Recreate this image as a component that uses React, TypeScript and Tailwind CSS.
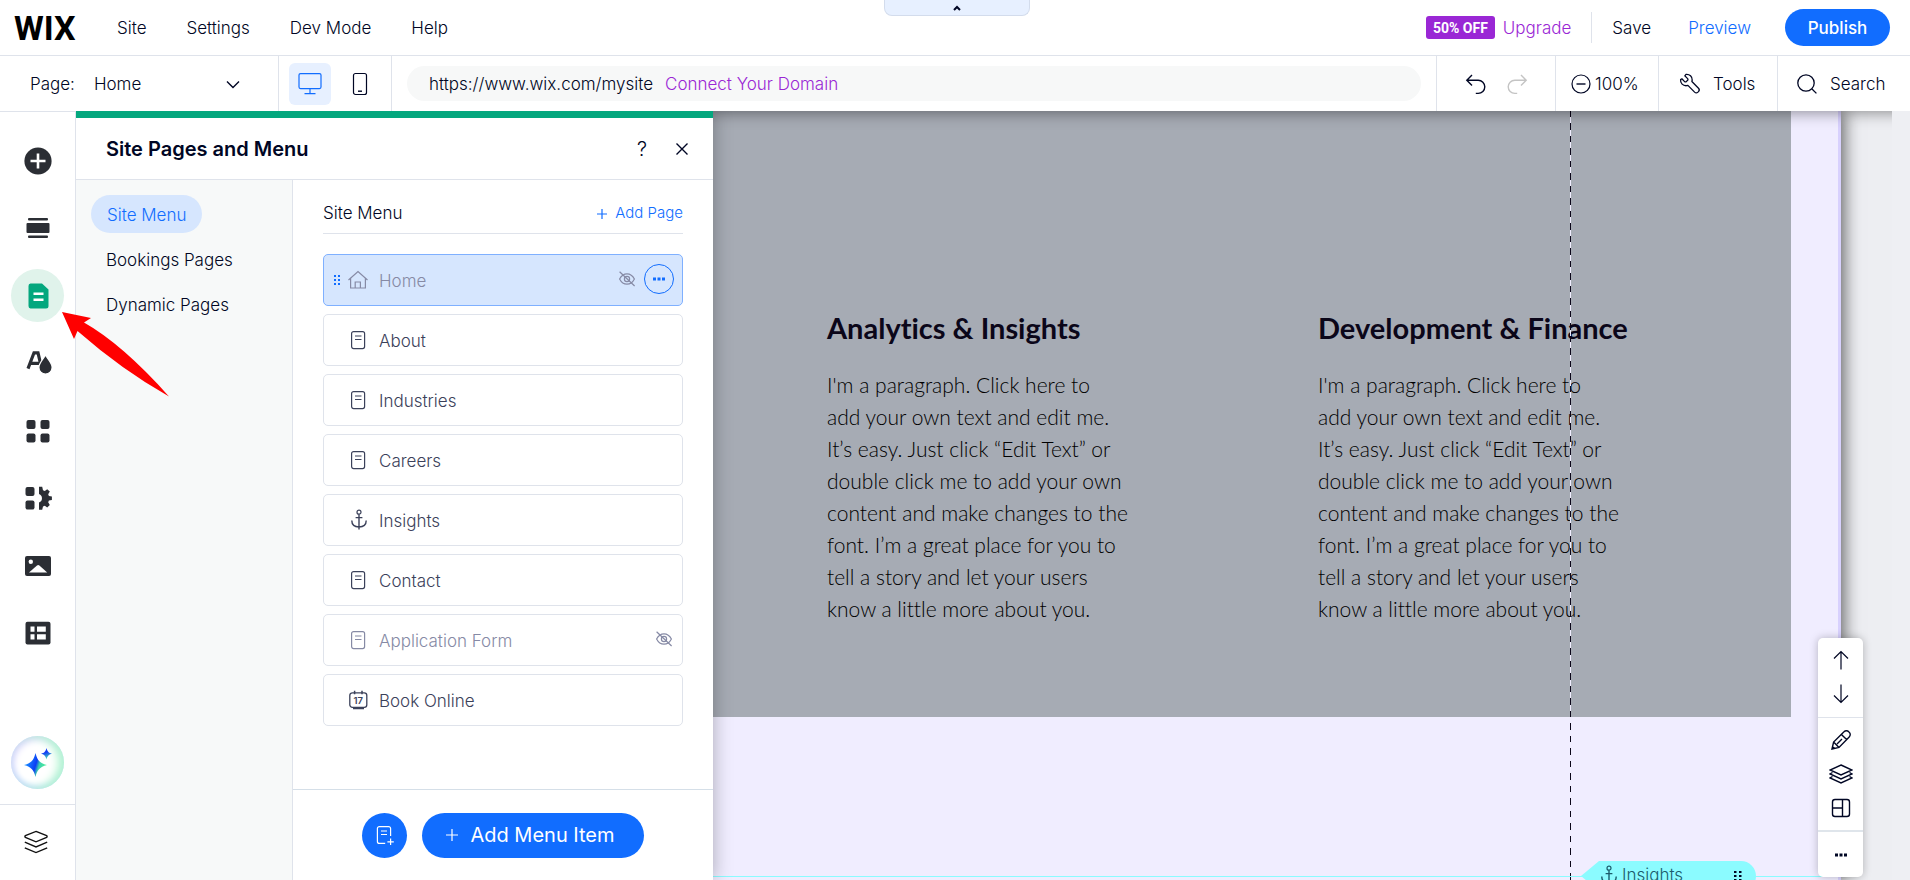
import type { ReactNode } from "react";

const INK = "#2b2e34";

function Icon({ size = 28, label, children }: { size?: number; label?: string; children: ReactNode }) {
  return (
    <svg
      width={size}
      height={size}
      viewBox={`0 0 ${size} ${size}`}
      fill="none"
      stroke="currentColor"
      strokeWidth="1.2"
      className="shrink-0"
      aria-hidden={label ? undefined : true}
      aria-label={label}
    >
      {children}
    </svg>
  );
}

/* ---------- page list icons ---------- */

function PageIcon() {
  return (
    <Icon size={22}>
      <rect x="4.6" y="2.6" width="13" height="17" rx="2" />
      <path d="M8 7h6.5M8 10.5h6.5" />
    </Icon>
  );
}

function HomeIcon() {
  return (
    <Icon size={22}>
      <path d="M1.5 11 11 2.6 20.5 11M3.6 9.4v9.6h14.8V9.4M8.2 19v-6h5.2v6" />
    </Icon>
  );
}

function AnchorIcon() {
  return (
    <Icon size={22}>
      <circle cx="12" cy="3.2" r="2" />
      <path d="M12 5.2V20.400M8.6 8.6h6.8M4.8 11.6c0 4.200 3 6.400 7.2 6.400s7.2-2.200 7.2-6.400" strokeWidth="1.4" />
    </Icon>
  );
}

function CalendarIcon() {
  return (
    <Icon size={22}>
      <rect x="2.8" y="3.8" width="17" height="14.6" rx="2.6" strokeWidth="1.3" />
      <path d="M7.6 1.8v3.4M15 1.8v3.4M6 19.6h11" strokeWidth="1.5" />
      <text x="6.6" y="14.6" fontSize="9.5" fontWeight="600" stroke="none" fill="currentColor" fontFamily="Inter, sans-serif">
        17
      </text>
    </Icon>
  );
}

function HiddenIcon() {
  return (
    <Icon size={18} label="Hidden from menu">
      <path d="M1.6 9C3.4 5.5 6 3.8 9 3.8s5.600 1.700 7.400 5.200c-1.800 3.500-4.400 5.200-7.400 5.200S3.400 12.500 1.600 9z" />
      <circle cx="9" cy="9" r="2.600" />
      <path d="M1.600 1.800 16.600 16" />
    </Icon>
  );
}

/* ---------- left rail icons ---------- */

function AddIcon() {
  return (
    <Icon>
      <circle cx="14" cy="14" r="13.6" fill={INK} stroke="none" />
      <path d="M14 6.500v15M6.500 14h15" stroke="#fff" strokeWidth="2.600" />
    </Icon>
  );
}

function SectionIcon() {
  return (
    <Icon>
      <g fill={INK} stroke="none">
        <rect x="4" y="4" width="20" height="2.600" rx="1" />
        <rect x="2.500" y="9" width="23" height="10" rx="1" />
        <rect x="4" y="21.400" width="20" height="2.600" rx="1" />
      </g>
    </Icon>
  );
}

function PagesIcon() {
  return (
    <Icon>
      <path d="M6.500 1.500H18l6.500 6V24a2.500 2.500 0 0 1-2.500 2.500H6.500A2.500 2.500 0 0 1 4.500 24V4a2.500 2.500 0 0 1 2-2.500z" fill="#04a77e" stroke="none" />
      <path d="M9.500 11.800h10M9.500 17.800h10" stroke="#fff" strokeWidth="2.400" />
    </Icon>
  );
}

function DesignIcon() {
  return (
    <Icon>
      <path d="M4 19.600 10 3.800h4l2.600 11M7 14.400h8" stroke={INK} strokeWidth="3.200" />
      <path d="M21.500 6c2 4 6.600 8 6.600 12.400a6.600 6.600 0 0 1-13.200 0C14.900 14 19.500 10 21.500 6z" fill={INK} stroke="#fff" strokeWidth="1.200" />
    </Icon>
  );
}

function AppsIcon() {
  return (
    <Icon>
      <g fill={INK} stroke="none">
        <rect x="2.500" y="3" width="9" height="9" rx="2" />
        <rect x="16.500" y="3" width="9" height="9" rx="2" />
        <rect x="2.500" y="16.500" width="9" height="9" rx="2" />
        <rect x="16.500" y="16.500" width="9" height="9" rx="2" />
      </g>
    </Icon>
  );
}

function BusinessIcon() {
  return (
    <Icon>
      <g fill={INK} stroke="none">
        <rect x="1.500" y="3" width="9" height="9" rx="2" />
        <rect x="1.500" y="16.500" width="9" height="9" rx="2" />
        <path d="M15 2.800h3.200l.8 3.400 1.800.7 2.400-1.700 2.600 2.400-1.600 2.700.7 1.700 3 .6v3.400l-3 .6-.7 1.700 1.600 2.700-2.600 2.400-2.400-1.700-1.800.7-.8 3.400H15V18.600a4.600 4.600 0 0 0 0-8.600z" />
      </g>
    </Icon>
  );
}

function MediaIcon() {
  return (
    <Icon>
      <rect x="1" y="4" width="26" height="20" rx="2" fill={INK} stroke="none" />
      <circle cx="6.800" cy="9.800" r="2.200" fill="#fff" stroke="none" />
      <path d="M5 20.600 13 13.400q1.200-.8 2.400 0l7.800 7.200z" fill="#fff" stroke="none" />
    </Icon>
  );
}

function TableIcon() {
  return (
    <Icon>
      <rect x="1.500" y="2.800" width="25" height="22.600" rx="2" fill={INK} stroke="none" />
      <path d="M6.500 7.600h4v5.200h-4zM13 7.600h8.800v5.200H13zM6.500 15.200h4v5.400h-4zM13 15.200h8.800v5.400H13z" fill="#fff" stroke="none" />
    </Icon>
  );
}

function SparkleIcon() {
  return (
    <svg width="30" height="30" viewBox="0 0 30 30" aria-hidden="true">
      <defs>
        <linearGradient id="spark" x1="0.1" y1="0.4" x2="0.9" y2="0.65">
          <stop offset="0" stopColor="#1b8cff" />
          <stop offset="0.5" stopColor="#0b3df5" />
          <stop offset="0.68" stopColor="#3fd0b0" />
          <stop offset="1" stopColor="#4af09a" />
        </linearGradient>
        <linearGradient id="sparkSmall" x1="0.3" y1="0" x2="0.6" y2="1">
          <stop offset="0.4" stopColor="#1440f5" />
          <stop offset="1" stopColor="#4af0b0" />
        </linearGradient>
      </defs>
      <path d="M12.500 5c1.600 6.800 4 10 11.500 12-7.500 2-9.900 5.200-11.500 12-1.600-6.800-4-10-11.500-12 7.500-2 9.900-5.200 11.500-12z" fill="url(#spark)" />
      <path d="M23.500 0c.9 3.400 2 4.800 5.500 5.700-3.500.9-4.600 2.300-5.500 5.700-.9-3.400-2-4.800-5.500-5.700 3.500-.9 4.600-2.300 5.500-5.700z" fill="url(#sparkSmall)" />
    </svg>
  );
}

function LayersIcon() {
  return (
    <Icon size={24}>
      <path d="M12 1.400 22.600 5.600q1 .9 0 1.800L12 11.800 1.400 7.400q-1-.9 0-1.800zM.8 12.200 12 17l11.200-4.800M.8 17.800 12 22.600l11.200-4.800" strokeWidth="1.400" />
    </Icon>
  );
}

/* ---------- data ---------- */

const railItems = [
  { label: "Add Elements", icon: <AddIcon /> },
  { label: "Add Section", icon: <SectionIcon /> },
  { label: "Pages and Menu", icon: <PagesIcon />, active: true },
  { label: "Site Design", icon: <DesignIcon /> },
  { label: "Add Apps", icon: <AppsIcon /> },
  { label: "My Business", icon: <BusinessIcon /> },
  { label: "Media", icon: <MediaIcon /> },
  { label: "Content Manager", icon: <TableIcon /> },
];

const menuItems = [
  { name: "About", icon: <PageIcon /> },
  { name: "Industries", icon: <PageIcon /> },
  { name: "Careers", icon: <PageIcon /> },
  { name: "Insights", icon: <AnchorIcon /> },
  { name: "Contact", icon: <PageIcon /> },
  { name: "Application Form", icon: <PageIcon />, hidden: true },
  { name: "Book Online", icon: <CalendarIcon /> },
];

const paragraph = [
  "I'm a paragraph. Click here to",
  "add your own text and edit me.",
  "It’s easy. Just click “Edit Text” or",
  "double click me to add your own",
  "content and make changes to the",
  "font. I’m a great place for you to",
  "tell a story and let your users",
  "know a little more about you.",
];

/* ---------- regions ---------- */

function MenuBar() {
  return (
    <div className="relative flex h-14 items-center border-b border-[#dfe3eb] bg-white pr-5 pl-[14px]">
      <a href="#" className="w-16 font-[Roboto,sans-serif] text-[34px] leading-none font-bold text-black">
        WIX
      </a>
      <nav className="ml-[39px] flex gap-10 pt-0.5">
        {["Site", "Settings", "Dev Mode", "Help"].map((item) => (
          <button key={item} type="button">
            {item}
          </button>
        ))}
      </nav>

      <button
        type="button"
        aria-label="Collapse toolbar"
        className="absolute top-0 left-1/2 flex h-4 w-[146px] -translate-x-[71px] items-center justify-center rounded-b-lg border border-t-0 border-[#d3dcec] bg-[#e7f0ff]"
      >
        <svg width="10" height="8" viewBox="0 0 10 8" fill="none" stroke="#000624" strokeWidth="2" aria-hidden="true">
          <path d="M2 6l3-3 3 3" />
        </svg>
      </button>

      <div className="ml-auto flex items-center">
        <span className="flex h-[23px] items-center rounded-[3px] bg-[#9a27d5] px-[7px] font-[Roboto,sans-serif] text-sm font-bold text-white">
          50% OFF
        </span>
        <a href="#" className="ml-2 pt-0.5 text-[#9a27d5]">
          Upgrade
        </a>
        <span className="ml-5 h-[31px] w-px bg-[#dfe3eb]" />
        <button type="button" className="ml-5 pt-0.5">
          Save
        </button>
        <button type="button" className="ml-[37px] pt-0.5 text-[#116dff]">
          Preview
        </button>
        <button type="button" className="ml-[34px] h-[37px] w-[105px] rounded-full bg-[#116dff] pt-0.5 font-medium text-white">
          Publish
        </button>
      </div>
    </div>
  );
}

function ToolBar() {
  return (
    <div className="flex h-[55px] items-stretch bg-white">
      <div className="flex w-[278px] items-center pt-0.5 pl-[30px]">
        <span>Page:</span>
        <button type="button" className="ml-[19px] flex flex-1 items-center justify-between pr-[38px]">
          Home
          <svg width="14" height="9" viewBox="0 0 14 9" fill="none" stroke="currentColor" strokeWidth="1.400" aria-hidden="true">
            <path d="M1 1.500l6 6 6-6" />
          </svg>
        </button>
      </div>
      <div className="flex items-center gap-2 border-x border-[#dfe3eb] px-[10px]">
        <button type="button" aria-label="Desktop" className="flex size-[42px] items-center justify-center rounded-md bg-[#e7f0ff] text-[#116dff]">
          <Icon size={26}>
            <path d="M3.500 2.600h19a1.500 1.500 0 0 1 1.500 1.500v12a1.500 1.500 0 0 1-1.500 1.500h-19a1.500 1.500 0 0 1-1.500-1.500v-12a1.500 1.500 0 0 1 1.500-1.500zM13 17.600v4.800M7.500 22.600h11" />
          </Icon>
        </button>
        <button type="button" aria-label="Mobile" className="flex size-[42px] items-center justify-center">
          <Icon size={26}>
            <rect x="6.500" y="2.500" width="13" height="21" rx="2" />
            <path d="M11 20.200h4" strokeWidth="1.400" />
          </Icon>
        </button>
      </div>
      <div className="flex flex-1 items-center px-[15px]">
        <div className="flex h-[35px] flex-1 items-center gap-3 rounded-full bg-[#f7f8f8] pt-0.5 pl-[22px]">
          <span>https://www.wix.com/mysite</span>
          <a href="#" className="text-[#9a27d5]">
            Connect Your Domain
          </a>
        </div>
      </div>
      <div className="flex w-[119px] items-center justify-center gap-[15px] border-l border-[#dfe3eb]">
        <button type="button" aria-label="Undo">
          <Icon size={26}>
            <path d="M9 4 3.800 9.200 9 14.400M3.800 9.200h11.400a6.600 6.600 0 0 1 0 13.200h-2.400" strokeWidth="1.400" />
          </Icon>
        </button>
        <button type="button" aria-label="Redo" className="text-[#c4c4c4]">
          <Icon size={26}>
            <path d="M17 4l5.200 5.200L17 14.400M22.200 9.200H10.800a6.600 6.600 0 0 0 0 13.200h2.400" strokeWidth="1.400" />
          </Icon>
        </button>
      </div>
      <button type="button" className="flex w-[103px] items-center gap-[3px] border-l border-[#dfe3eb] pl-[14px]">
        <Icon size={22}>
          <circle cx="11" cy="11" r="9" />
          <path d="M6.500 11h9" strokeWidth="1.400" />
        </Icon>
        <span className="pt-0.5">100%</span>
      </button>
      <button type="button" className="flex w-[119px] items-center gap-3 border-l border-[#dfe3eb] pl-5">
        <Icon size={22}>
          <path
            d="M7 1.400c3.600-.4 6.400 2.200 6.200 5.600l-.3 1.500 6.600 6.700a2.400 2.400 0 0 1 0 3.300l-.6.6a2.400 2.400 0 0 1-3.300 0l-6.700-6.700-1.300.3C4 13 1.200 10.200 1.600 6.600l1.300-.8 2.700 2.800a1.200 1.200 0 0 0 1.700 0l1.300-1.300a1.200 1.200 0 0 0 0-1.700L5.800 2.800z"
            strokeLinejoin="round"
            strokeWidth="1.300"
          />
        </Icon>
        <span className="pt-0.5">Tools</span>
      </button>
      <button type="button" className="flex w-[133px] items-center gap-3 border-l border-[#dfe3eb] pl-[18px]">
        <Icon size={22}>
          <circle cx="10" cy="10" r="8.200" strokeWidth="1.300" />
          <path d="M16 16l4.400 4.400" strokeWidth="1.300" />
        </Icon>
        <span className="pt-0.5">Search</span>
      </button>
    </div>
  );
}

function Rail() {
  return (
    <aside className="relative z-30 flex w-[76px] shrink-0 flex-col border-t border-r border-[#dfe3eb] bg-white">
      <ul className="flex h-[548px] flex-col items-center justify-between pt-[22px]">
        {railItems.map((item) => (
          <li key={item.label}>
            <button
              type="button"
              aria-label={item.label}
              className={`flex size-[53px] items-center justify-center rounded-full ${item.active ? "bg-[#e0f3eb]" : ""}`}
            >
              {item.icon}
            </button>
          </li>
        ))}
      </ul>
      <button
        type="button"
        aria-label="AI tools"
        className="mx-auto mt-auto mb-[15px] flex size-[53px] items-center justify-center rounded-full bg-white shadow-[inset_-6px_0_10px_#b5f5d2,inset_2px_3px_7px_#d9d4fb,inset_0_-2px_6px_#b5d6ff]"
      >
        <SparkleIcon />
      </button>
      <button type="button" aria-label="Layers" className="flex h-[76px] items-center justify-center border-t border-[#dfe3eb] pr-[3px] pb-[2px] text-[#111]">
        <LayersIcon />
      </button>

      <svg
        width="108"
        height="86"
        viewBox="0 0 108 86"
        fill="#ff0000"
        aria-hidden="true"
        className="pointer-events-none absolute top-[200px] left-[62px]"
      >
        <path d="M0 0 29 6 22 10.600Q60 32 107 84.500 60 58 15.500 19L12 27z" />
      </svg>
    </aside>
  );
}

function PagesPanel() {
  return (
    <section className="z-20 flex w-[637px] shrink-0 flex-col border-t-[7px] border-[#04a77e] bg-white shadow-[0_0_18px_rgba(0,0,0,0.3)] [clip-path:inset(0_-40px_0_0)]">
      <header className="flex h-[62px] items-center border-b border-[#dfe3eb] pr-[23px] pl-[30px]">
        <h2 className="text-[20px] font-semibold">Site Pages and Menu</h2>
        <button type="button" aria-label="Help" className="ml-auto text-[20px] font-light">
          ?
        </button>
        <button type="button" aria-label="Close" className="ml-[27px]">
          <Icon size={16}>
            <path d="M2.500 2.500l11 11M13.500 2.500l-11 11" strokeWidth="1.400" />
          </Icon>
        </button>
      </header>

      <div className="flex min-h-0 flex-1">
        <nav className="flex w-[217px] shrink-0 flex-col items-start gap-[7px] border-r border-[#dfe3eb] bg-[#f7f9f9] pt-[15px] pl-[15px]">
          <button type="button" className="h-[38px] rounded-full bg-[#d6e6fe] px-4 pt-1 text-[#116dff]">
            Site Menu
          </button>
          <button type="button" className="h-[38px] px-[15px] pt-1">
            Bookings Pages
          </button>
          <button type="button" className="h-[38px] px-[15px] pt-1">
            Dynamic Pages
          </button>
        </nav>

        <div className="flex flex-1 flex-col">
          <div className="mx-[30px] flex h-[54px] items-center justify-between border-b border-[#dfe3eb] pt-[14px]">
            <h3>Site Menu</h3>
            <button type="button" className="flex items-center gap-2 text-[15px] text-[#116dff]">
              <Icon size={10}>
                <path d="M5 0v10M0 5h10" />
              </Icon>
              Add Page
            </button>
          </div>

          <ul className="mx-[30px] mt-5 flex flex-col gap-2 text-[#3b415a]">
            <li className="flex h-[52px] items-center rounded-[5px] border border-[#7fb0ff] bg-[#d6e6fe] pr-2 pl-[10px] text-[#868aa5]">
              <svg width="8" height="12" viewBox="0 0 8 12" fill="#116dff" aria-hidden="true">
                <path d="M0 1h2v2H0zM4 1h2v2H4zM0 5h2v2H0zM4 5h2v2H4zM0 9h2v2H0zM4 9h2v2H4z" />
              </svg>
              <span className="ml-[5px] flex items-center gap-[10px]">
                <HomeIcon />
                <span className="pt-[3px]">Home</span>
              </span>
              <span className="ml-auto flex items-center gap-2 pb-[3px]">
                <HiddenIcon />
                <button type="button" aria-label="More actions" className="flex size-[30px] items-center justify-center rounded-full border border-[#116dff]">
                  <svg width="14" height="4" viewBox="0 0 14 4" fill="#116dff" aria-hidden="true">
                    <path d="M1 .5h3v3H1zM5.500.5h3v3h-3zM10 .5h3v3h-3z" />
                  </svg>
                </button>
              </span>
            </li>
            {menuItems.map((item) => (
              <li
                key={item.name}
                className={`flex h-[52px] items-center gap-[10px] rounded-[5px] border border-[#dfe3eb] pr-[9px] pl-[23px] ${item.hidden ? "text-[#868aa5]" : ""}`}
              >
                {item.icon}
                <span className="pt-[3px]">{item.name}</span>
                {item.hidden && (
                  <span className="ml-auto pb-[3px]">
                    <HiddenIcon />
                  </span>
                )}
              </li>
            ))}
          </ul>

          <footer className="mt-auto flex h-[91px] items-center justify-center gap-[15px] border-t border-[#d5dfe8]">
            <button type="button" aria-label="Add page" className="flex size-[45px] items-center justify-center rounded-full bg-[#116dff] text-white">
              <Icon size={22}>
                <path d="M16.600 12V4.600a2 2 0 0 0-2-2H5.400a2 2 0 0 0-2 2v12.800a2 2 0 0 0 2 2h5.800M7 7h6M7 10.500h6M16.600 14.600v6.400M13.400 17.800h6.400" />
              </Icon>
            </button>
            <button type="button" className="flex h-[45px] w-[222px] items-center justify-center gap-3 rounded-full bg-[#116dff] pr-[5px] text-[20px] font-normal text-white">
              <Icon size={12}>
                <path d="M6 0v12M0 6h12" />
              </Icon>
              Add Menu Item
            </button>
          </footer>
        </div>
      </div>
    </section>
  );
}

function SectionToolbar() {
  const item = "flex items-center justify-center";
  return (
    <div className="absolute right-[29px] bottom-[3px] z-20 flex w-[45px] flex-col rounded-[5px] bg-white text-[#000624] shadow-[0_0_8px_rgba(0,0,0,0.25)]">
      <div className="flex h-20 flex-col justify-center gap-[10px] border-b border-[#dfe3eb] pb-[1px]">
        <button type="button" aria-label="Move up" className={item}>
          <Icon size={24}>
            <path d="M12 21.500V4M5 10.500l7-7 7 7" />
          </Icon>
        </button>
        <button type="button" aria-label="Move down" className={item}>
          <Icon size={24}>
            <path d="M12 2.500V20M5 13.500l7 7 7-7" />
          </Icon>
        </button>
      </div>
      <div className="flex h-[114px] flex-col justify-center gap-[10px] border-b-2 border-[#dfe5eb]">
        <button type="button" aria-label="Edit" className={item}>
          <Icon size={24}>
            <path d="M3 21l1.600-7L15 3.800a3.300 3.300 0 0 1 4.800 0l.4.4a3.300 3.300 0 0 1 0 4.800L10 19.400zM4.600 14l5.400 5.400M12.400 6.400l5.200 5.200M8 16l5-5M3.400 18.600l2 2" strokeWidth="1.400" />
          </Icon>
        </button>
        <button type="button" aria-label="Arrange" className={item}>
          <Icon size={24}>
            <path d="M12 3l11 5-11 5L1 8zM3.500 10.500 1 12l11 5 11-5-2.500-1.500M3.500 14.500 1 16l11 5 11-5-2.500-1.500" strokeWidth="1.400" />
          </Icon>
        </button>
        <button type="button" aria-label="Layout" className={item}>
          <Icon size={24}>
            <rect x="3.500" y="3.500" width="17" height="17" rx="2.500" strokeWidth="1.400" />
            <path d="M13.500 3.500v17M3.500 12h10" strokeWidth="1.400" />
          </Icon>
        </button>
      </div>
      <button type="button" aria-label="More" className="flex h-[45px] items-center justify-center">
        <svg width="14" height="4" viewBox="0 0 14 4" fill="#000624" aria-hidden="true">
          <path d="M1 .5h3v3H1zM5.500.5h3v3h-3zM10 .5h3v3h-3z" />
        </svg>
      </button>
    </div>
  );
}

function Canvas() {
  return (
    <main className="relative flex min-w-0 flex-1 overflow-hidden bg-[#edeef2]">
      <div className="relative flex-1 border-r-[3px] border-[#d8d1fe] bg-[#f0edff] shadow-[3px_0_16px_rgba(0,0,0,0.6)]">
        <section className="mr-[47px] grid h-[606px] grid-cols-2 gap-x-[18px] bg-[#a6abb4] pt-[197px] pl-[114px] font-[Lato,sans-serif] text-[#0b0619] [font-variant-ligatures:none]">
          {["Analytics & Insights", "Development & Finance"].map((title) => (
            <article key={title}>
              <h2 className="text-[29px] leading-10 font-bold">{title}</h2>
              <p className="mt-[21px] text-[21px] leading-8 font-light whitespace-nowrap text-black">
                {paragraph.map((line) => (
                  <span key={line} className="block">
                    {line}
                  </span>
                ))}
              </p>
            </article>
          ))}
        </section>

        <div className="absolute inset-y-0 right-[267px] w-px bg-[repeating-linear-gradient(#0b0619_0_6px,#f0edff_6px_12px,#0b0619_12px_19px,#f0edff_19px_25px)]" />
        <div className="absolute inset-x-0 bottom-[3px] h-px bg-[#8bfbff]" />
        <div className="absolute right-[82px] -bottom-[11px] flex h-[30px] w-[175px] items-center rounded-r-full bg-[#8bfbff] pr-[14px] pl-4 text-[#1c5c6c] [clip-path:polygon(0_50%,18px_0,100%_0,100%_100%,18px_100%)]">
          <AnchorIcon />
          <span className="ml-[3px]">Insights</span>
          <svg width="8" height="12" viewBox="0 0 8 12" fill="#000624" aria-hidden="true" className="ml-auto">
            <path d="M0 1h2.500v2H0zM5 1h2.500v2H5zM0 5h2.500v2H0zM5 5h2.500v2H5zM0 9h2.500v2H0zM5 9h2.500v2H5z" />
          </svg>
        </div>
      </div>
      <div className="w-[51px] shrink-0" />
      <SectionToolbar />
    </main>
  );
}

export default function App() {
  return (
    <div className="flex h-screen flex-col overflow-hidden bg-white font-[Inter,sans-serif] text-[17px] font-[350] text-[#000624]">
      <div className="relative z-10 shadow-[0_2px_14px_rgba(0,0,0,0.4)]">
        <MenuBar />
        <ToolBar />
      </div>
      <div className="flex min-h-0 flex-1">
        <Rail />
        <PagesPanel />
        <Canvas />
        <div className="z-20 w-[18px] shrink-0 bg-[#eeeff3]" />
      </div>
    </div>
  );
}
